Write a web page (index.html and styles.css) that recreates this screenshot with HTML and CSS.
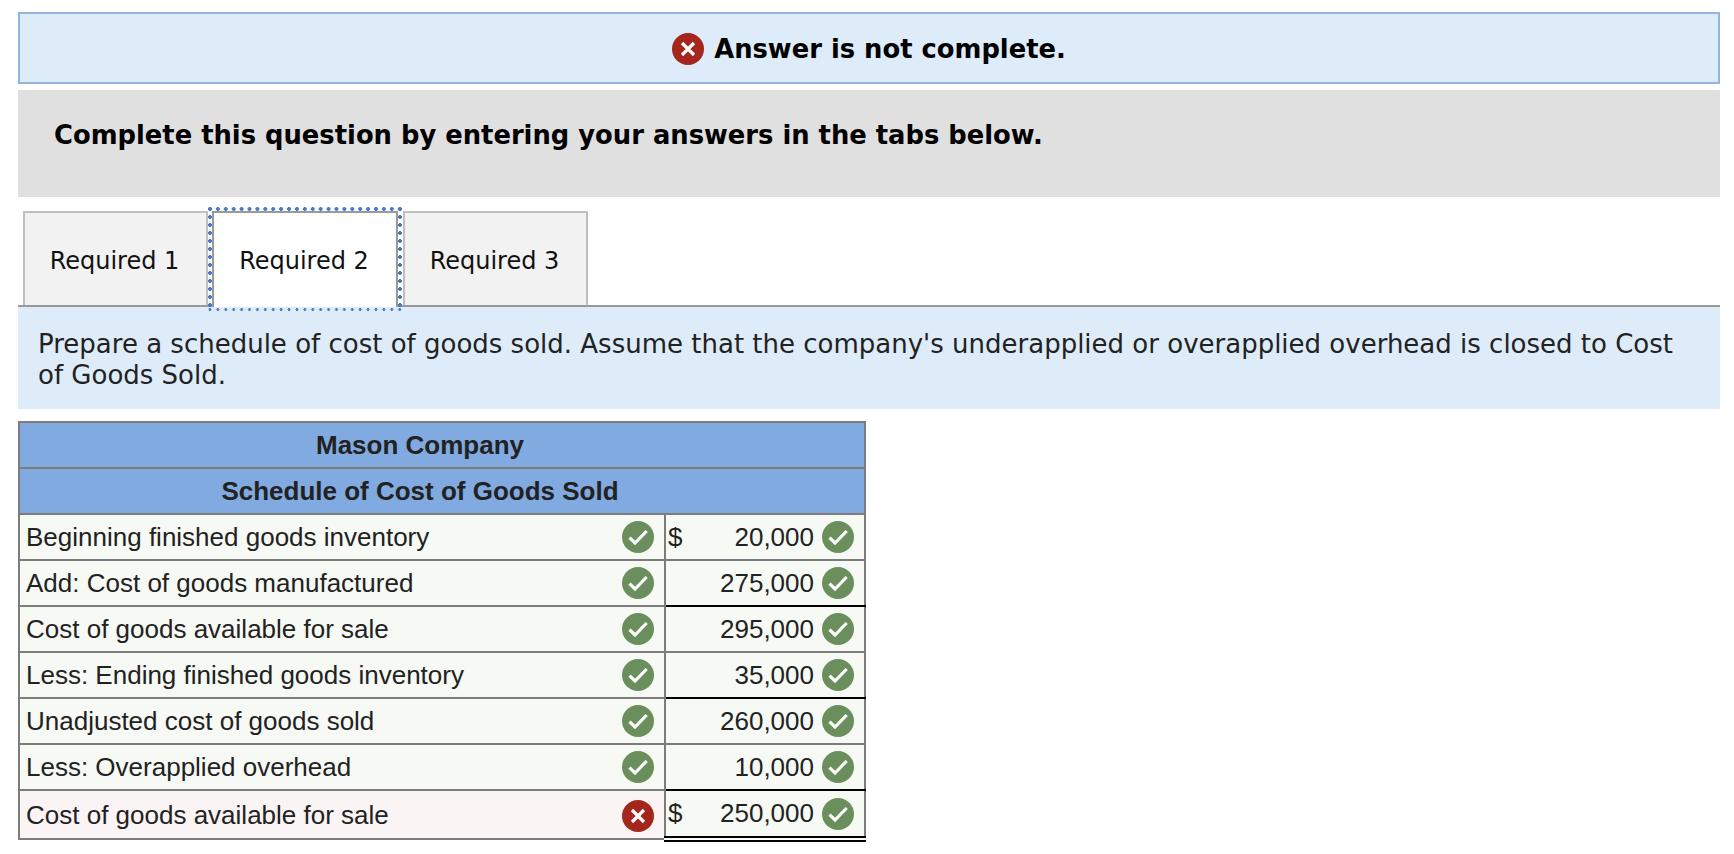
FILE: index.html
```html
<!DOCTYPE html>
<html lang="en">
<head>
    <meta charset="UTF-8">
    <title>Answer is not complete</title>
    <link rel="stylesheet" href="styles.css">
</head>
<body>
    <svg class="defs" width="0" height="0">
        <symbol id="icon-ok" viewBox="0 0 32 32">
            <circle cx="16" cy="16" r="16" fill="#6a8f5c"/>
            <path d="M7.5 16.7l5.5 5.3L24.7 10" fill="none" stroke="#fff" stroke-width="3.2"/>
        </symbol>
        <symbol id="icon-bad" viewBox="0 0 32 32">
            <circle cx="16" cy="16" r="16" fill="#a4261d"/>
            <path d="M10 10l12 12M22 10L10 22" fill="none" stroke="#fff" stroke-width="3.2"/>
        </symbol>
    </svg>

    <div class="banner">
        <svg class="icon"><use href="#icon-bad"/></svg>
        <span>Answer is not complete.</span>
    </div>

    <div class="instructions">Complete this question by entering your answers in the tabs below.</div>

    <div class="tabs">
        <div class="tab">Required 1</div>
        <div class="tab active">Required 2</div>
        <div class="tab">Required 3</div>
    </div>

    <div class="prompt">Prepare a schedule of cost of goods sold. Assume that the company's underapplied or overapplied overhead is closed to Cost of Goods Sold.</div>

    <table class="schedule">
        <tr class="head"><th colspan="2">Mason Company</th></tr>
        <tr class="head"><th colspan="2">Schedule of Cost of Goods Sold</th></tr>
        <tr>
            <td class="label"><div class="cell"><span>Beginning finished goods inventory</span><svg class="icon"><use href="#icon-ok"/></svg></div></td>
            <td class="amount"><div class="cell"><span class="dollar">$</span><span class="num">20,000</span><svg class="icon"><use href="#icon-ok"/></svg></div></td>
        </tr>
        <tr>
            <td class="label"><div class="cell"><span>Add: Cost of goods manufactured</span><svg class="icon"><use href="#icon-ok"/></svg></div></td>
            <td class="amount line"><div class="cell"><span class="num">275,000</span><svg class="icon"><use href="#icon-ok"/></svg></div></td>
        </tr>
        <tr>
            <td class="label"><div class="cell"><span>Cost of goods available for sale</span><svg class="icon"><use href="#icon-ok"/></svg></div></td>
            <td class="amount"><div class="cell"><span class="num">295,000</span><svg class="icon"><use href="#icon-ok"/></svg></div></td>
        </tr>
        <tr>
            <td class="label"><div class="cell"><span>Less: Ending finished goods inventory</span><svg class="icon"><use href="#icon-ok"/></svg></div></td>
            <td class="amount line"><div class="cell"><span class="num">35,000</span><svg class="icon"><use href="#icon-ok"/></svg></div></td>
        </tr>
        <tr>
            <td class="label"><div class="cell"><span>Unadjusted cost of goods sold</span><svg class="icon"><use href="#icon-ok"/></svg></div></td>
            <td class="amount"><div class="cell"><span class="num">260,000</span><svg class="icon"><use href="#icon-ok"/></svg></div></td>
        </tr>
        <tr>
            <td class="label"><div class="cell"><span>Less: Overapplied overhead</span><svg class="icon"><use href="#icon-ok"/></svg></div></td>
            <td class="amount line"><div class="cell"><span class="num">10,000</span><svg class="icon"><use href="#icon-ok"/></svg></div></td>
        </tr>
        <tr class="last">
            <td class="label wrong"><div class="cell"><span>Cost of goods available for sale</span><svg class="icon"><use href="#icon-bad"/></svg></div></td>
            <td class="amount total"><div class="cell"><span class="dollar">$</span><span class="num">250,000</span><svg class="icon"><use href="#icon-ok"/></svg></div></td>
        </tr>
    </table>
</body>
</html>
```

FILE: styles.css
```css
body {
    margin: 0;
    padding: 12px 14px 0 18px;
    background: #fff;
    color: #000;
    font-family: "DejaVu Sans", sans-serif;
}
.defs {
    position: absolute;
}
.icon {
    width: 32px;
    height: 32px;
    flex: none;
}
.banner {
    display: flex;
    align-items: center;
    justify-content: center;
    gap: 10px;
    height: 72px;
    box-sizing: border-box;
    padding-top: 2px;
    background: #deebf9;
    border: 2px solid #93b5da;
    font-size: 25.8px;
    font-weight: bold;
}
.instructions {
    height: 107px;
    box-sizing: border-box;
    margin-top: 6px;
    padding: 28px 36px 0;
    background: #e0e0e0;
    font-size: 25.8px;
    line-height: 34px;
    font-weight: bold;
}
.tabs {
    display: flex;
    gap: 5px;
    margin-top: 14px;
    padding-left: 5px;
    border-bottom: 2px solid #999;
}
.tab {
    display: flex;
    align-items: center;
    justify-content: center;
    width: 185px;
    height: 94px;
    box-sizing: border-box;
    padding: 4px 2px 0 0;
    background: #f2f2f2;
    border: 2px solid #c0c0c0;
    border-bottom: none;
    font-size: 24px;
    color: #111;
}
.tab.active {
    position: relative;
    width: 186px;
    height: 96px;
    margin: 0 0 -2px -1px;
    padding-bottom: 2px;
    background: #fff;
    border-color: #999;
}
/* focus ring: the dots are spaced wider than a dotted outline draws them */
.tab.active::after {
    content: "";
    position: absolute;
    inset: -6px -6px -4px;
    background:
        radial-gradient(circle, #4a7cc4 1.7px, transparent 2.2px) -2px 0 / 7.92px 4px repeat-x,
        radial-gradient(circle, #4a7cc4 1.2px, transparent 1.7px) -2px 100% / 7.92px 3px repeat-x,
        radial-gradient(circle, #4a7cc4 1.7px, transparent 2.2px) 0 -2px / 4px 8px repeat-y,
        radial-gradient(circle, #4a7cc4 1.7px, transparent 2.2px) 100% -2px / 4px 8px repeat-y;
}
.prompt {
    height: 102px;
    box-sizing: border-box;
    padding: 22px 40px 0 20px;
    background: #deebf9;
    font-size: 26px;
    line-height: 31px;
    color: #222;
}
.schedule {
    width: 848px;
    margin-top: 12px;
    border-collapse: collapse;
    font-family: "Liberation Sans", sans-serif;
    font-size: 26px;
    color: #222;
}
.schedule th, .schedule td {
    height: 44px;
    padding: 0;
    border: 2px solid #7c7c7c;
}
.schedule th {
    padding-right: 44px;
    background: #80aae0;
    font-weight: bold;
}
.schedule td {
    background: #f7f9f5;
}
.label {
    width: 644px;
}
.schedule td.wrong {
    background: #fbf4f4;
}
.cell {
    display: flex;
    align-items: center;
    justify-content: space-between;
    padding: 0 10px 0 6px;
}
.last .cell {
    padding-top: 2px;
}
.amount .cell {
    justify-content: flex-end;
    gap: 8px;
    padding: 0 10px 0 2px;
}
.last .amount .cell {
    padding-top: 0;
}
.dollar {
    margin-right: auto;
}
.schedule td.line {
    border-bottom-color: #000;
}
.schedule .last td {
    height: 45px;
}
.schedule td.total {
    border-top-color: #000;
    border-bottom: 6px double #000;
}
```
